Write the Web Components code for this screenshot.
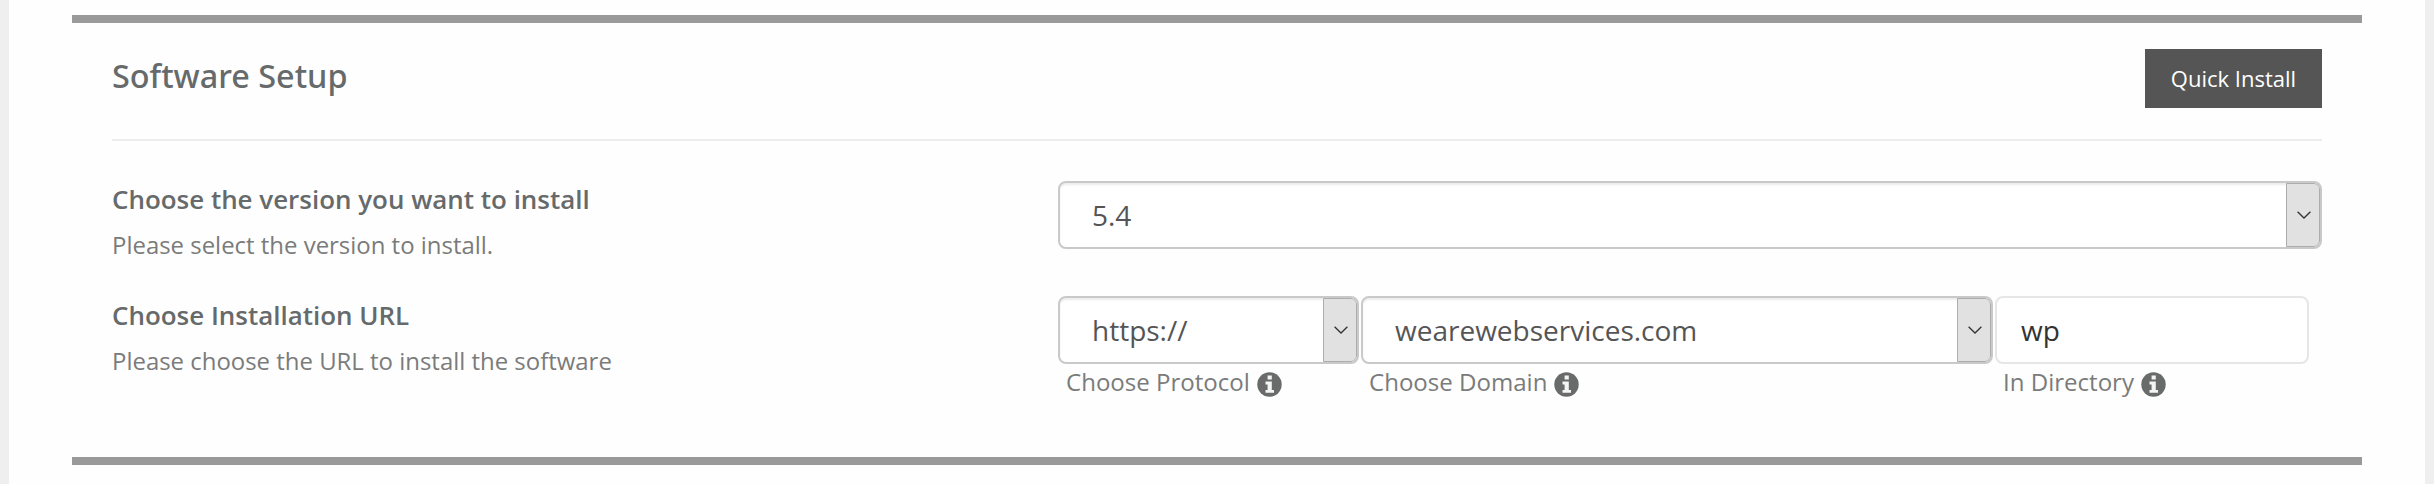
<!DOCTYPE html>
<html lang="en">
<head>
<meta charset="utf-8">
<title>Software Setup</title>
<style>
    body{
        margin: 0;
        background: #efefef;
        font-family: 'Open Sans', 'Noto Sans', sans-serif;
        color: #666a6b;
    }
</style>
</head>
<body>
<setup-panel heading="Software Setup">
    <action-button slot="action">Quick Install</action-button>

    <form-row label="Choose the version you want to install" hint="Please select the version to install.">
        <select-box value="5.4" style="width: 1264px"></select-box>
    </form-row>

    <form-row label="Choose Installation URL" hint="Please choose the URL to install the software">
        <field-caption text="Choose Protocol">
            <select-box value="https://" style="width: 301px"></select-box>
        </field-caption>
        <field-caption text="Choose Domain">
            <select-box value="wearewebservices.com" style="width: 632px"></select-box>
        </field-caption>
        <field-caption text="In Directory">
            <text-box value="wp" style="width: 314px"></text-box>
        </field-caption>
    </form-row>
</setup-panel>

<script>
function render(el, html){
    const template = document.createElement('template');
    template.innerHTML = html;
    const shadowRoot = el.attachShadow({mode: 'open'});
    shadowRoot.appendChild(template.content.cloneNode(true));
    return shadowRoot;
}

class SetupPanel extends HTMLElement{
    constructor(){
        super();
        const root = render(this, `
            <style>
                :host{
                    display: flex;
                    box-sizing: border-box;
                    height: 484px;
                    margin: 0 9px;
                    padding: 15px 63px 19px;
                    background: #fefefe;
                }
                section{
                    flex: 1;
                    border-top: 8px solid #999a99;
                    border-bottom: 8px solid #999;
                    padding: 0 40px;
                }
                header{
                    display: flex;
                    justify-content: space-between;
                    align-items: flex-start;
                    box-sizing: border-box;
                    height: 118px;
                    padding-top: 26px;
                    border-bottom: 2px solid #ededed;
                    margin-bottom: 40px;
                }
                h2{
                    margin: 0;
                    font-family: 'Noto Sans', sans-serif;
                    font-size: 32.4px;
                    line-height: 53px;
                    font-weight: 500;
                }
            </style>
            <section>
                <header>
                    <h2></h2>
                    <slot name="action"></slot>
                </header>
                <slot></slot>
            </section>
        `);
        root.querySelector('h2').textContent = this.getAttribute('heading');
    }
}

class ActionButton extends HTMLElement{
    constructor(){
        super();
        render(this, `
            <style>
                :host{ display: block; }
                button{
                    width: 177px;
                    height: 59px;
                    padding: 0 0 1px;
                    border: none;
                    background: #555;
                    color: #fff;
                    font-family: inherit;
                    font-size: 22px;
                    cursor: pointer;
                }
            </style>
            <button><slot></slot></button>
        `);
    }
}

class FormRow extends HTMLElement{
    constructor(){
        super();
        const root = render(this, `
            <style>
                :host{
                    display: grid;
                    grid-template-columns: 946px 1fr;
                    height: 115px;
                }
                :host(:last-child) .text{ padding-top: 1px; }
                label{
                    display: block;
                    font-size: 25.95px;
                    line-height: 37px;
                    font-weight: 600;
                }
                p{
                    margin: 9px 0 0;
                    font-size: 23.95px;
                    line-height: 36px;
                    color: #7a7b7b;
                }
                .fields{
                    display: flex;
                    align-items: flex-start;
                    gap: 2px;
                }
            </style>
            <div class='text'>
                <label></label>
                <p></p>
            </div>
            <div class='fields'><slot></slot></div>
        `);
        root.querySelector('label').textContent = this.getAttribute('label');
        root.querySelector('p').textContent = this.getAttribute('hint');
    }
}

class SelectBox extends HTMLElement{
    constructor(){
        super();
        const root = render(this, `
            <style>
                :host{
                    display: flex;
                    box-sizing: border-box;
                    height: 68px;
                    border: 2px solid #c9c9c9;
                    border-radius: 8px;
                    background: #fff;
                    box-shadow: inset 0 2px 2px rgba(0, 0, 0, .075);
                    overflow: hidden;
                }
                .value{
                    flex: 1;
                    padding-left: 32px;
                    font-size: 28px;
                    line-height: 65px;
                    color: #555;
                }
                .arrow{
                    display: flex;
                    align-items: center;
                    justify-content: center;
                    box-sizing: border-box;
                    width: 34px;
                    padding-left: 1px;
                    background: #e1e1e1;
                    border: 1px solid #adadad;
                    border-radius: 0 6px 6px 0;
                }
            </style>
            <span class='value'></span>
            <span class='arrow'>
                <svg width="14" height="8" viewBox="0 0 14 8" fill="none" stroke="#333" stroke-width="1.3">
                    <path d="M.6 .7 7 7 13.4 .7"/>
                </svg>
            </span>
        `);
        root.querySelector('.value').textContent = this.getAttribute('value');
    }
}

class TextBox extends HTMLElement{
    constructor(){
        super();
        const root = render(this, `
            <style>
                :host{
                    display: block;
                    box-sizing: border-box;
                    height: 68px;
                    padding-left: 24px;
                    border: 2px solid #e6e6e6;
                    border-radius: 8px;
                    background: #fff;
                    font-size: 28px;
                    line-height: 65px;
                    color: #333;
                }
            </style>
            <span></span>
        `);
        root.querySelector('span').textContent = this.getAttribute('value');
    }
}

class FieldCaption extends HTMLElement{
    constructor(){
        super();
        const root = render(this, `
            <style>
                :host{ display: block; }
                .caption{
                    display: flex;
                    align-items: center;
                    gap: 7px;
                    padding-left: 8px;
                    font-size: 24.05px;
                    line-height: 35px;
                    color: #7a7b7b;
                }
                svg{ margin-top: 5px; }
            </style>
            <slot></slot>
            <div class='caption'>
                <span></span>
                <svg width="25" height="25" viewBox="0 0 25 25">
                    <circle cx="12.5" cy="12.5" r="12.2" fill="#696b6b"/>
                    <path fill="#f4f4f4" d="M10.6 3.6h4.2v3.8h-4.2zM8.5 9.5h6.3v8.6h2.2v2.7H8.5v-2.7h2.1v-5.6H8.5z"/>
                </svg>
            </div>
        `);
        root.querySelector('span').textContent = this.getAttribute('text');
    }
}

customElements.define('setup-panel', SetupPanel);
customElements.define('action-button', ActionButton);
customElements.define('form-row', FormRow);
customElements.define('select-box', SelectBox);
customElements.define('text-box', TextBox);
customElements.define('field-caption', FieldCaption);
</script>
</body>
</html>
